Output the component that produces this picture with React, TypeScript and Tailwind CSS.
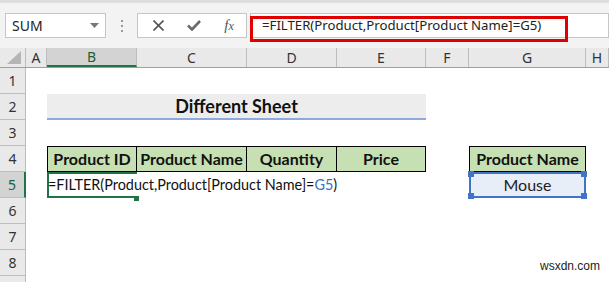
import React from 'react';

const COLS = [26, 21, 90, 110, 90, 89, 43, 117, 23];
const LETTERS = ['', 'A', 'B', 'C', 'D', 'E', 'F', 'G', 'H'];
const ROW_H = 26;

const cellFont = { fontFamily: 'Lato, "Open Sans", sans-serif' };

function Toolbar() {
  return (
    <div className="relative flex h-[45px] items-start bg-[#f3f3f3] pt-[10px]">
      {/* name box */}
      <div className="ml-[5px] flex h-[25px] w-[101px] items-center justify-between border border-[#c6c6c6] bg-white pl-[6px] pr-[6px]">
        <span className="text-[14px] text-[#222]" style={{ fontFamily: '"Noto Sans", "Open Sans", sans-serif' }}>
          SUM
        </span>
        <svg width="9" height="5" viewBox="0 0 9 5">
          <path d="M0 0 L9 0 L4.5 5 Z" fill="#777" />
        </svg>
      </div>
      {/* dots */}
      <div className="flex w-[31px] flex-col items-center gap-[3px] pt-[7px]">
        <span className="h-[2px] w-[2px] bg-[#999]" />
        <span className="h-[2px] w-[2px] bg-[#999]" />
        <span className="h-[2px] w-[2px] bg-[#999]" />
      </div>
      {/* cancel / enter / fx */}
      <div className="flex h-[25px] w-[110px] items-center border border-[#c6c6c6] bg-white">
        <div className="flex w-[38px] justify-center pl-[2px]">
          <svg width="11" height="11" viewBox="0 0 11 11">
            <path d="M0.5 0.5 L10.5 10.5 M10.5 0.5 L0.5 10.5" stroke="#555" strokeWidth="1.6" />
          </svg>
        </div>
        <div className="flex w-[36px] justify-center">
          <svg width="14" height="11" viewBox="0 0 14 11">
            <path d="M1 5.5 L5 9.5 L13 1" stroke="#6a6a6a" strokeWidth="2.6" fill="none" />
          </svg>
        </div>
        <div className="flex w-[34px] justify-center">
          <span className="text-[15px] italic text-[#555]" style={{ fontFamily: '"Liberation Serif", serif' }}>
            f<span className="text-[12px]">x</span>
          </span>
        </div>
      </div>
      {/* formula bar */}
      <div className="ml-[3px] flex h-[25px] flex-1 items-center border border-[#c6c6c6] bg-white pl-[11px]">
        <span className="whitespace-nowrap text-[13.2px] text-[#222]" style={{ fontFamily: '"Noto Sans", "Open Sans", sans-serif' }}>
          =FILTER(Product,Product[Product Name]=G5)
        </span>
      </div>
      {/* highlight annotation */}
      <div className="pointer-events-none absolute left-[250px] top-[13px] h-[26px] w-[318px] border-[3px] border-[#e10000]" />
    </div>
  );
}

function ColumnHeaders() {
  return (
    <div className="flex h-[20px] border-b border-[#a0a0a0] bg-[#e9e9e9]">
      {COLS.map((w, i) => (
        <div
          key={i}
          style={{ width: w }}
          className={
            i === 0
              ? 'relative shrink-0 border-r border-[#bdbdbd]'
              : i === 2
              ? 'flex shrink-0 items-center justify-center border-r border-[#bdbdbd] border-b-2 border-b-[#217346] bg-[#d3d3d3] text-[14px] text-[#1f5f3a]'
              : 'flex shrink-0 items-center justify-center border-r border-[#bdbdbd] text-[14px] text-[#333]'
          }
        >
          {i === 0 ? (
            <svg className="absolute bottom-[3px] right-[4px]" width="14" height="13" viewBox="0 0 14 13">
              <path d="M14 0 L14 13 L0 13 Z" fill="#b5b5b5" />
            </svg>
          ) : (
            <span style={{ fontFamily: '"Noto Sans", sans-serif' }}>{LETTERS[i]}</span>
          )}
        </div>
      ))}
    </div>
  );
}

function RowHeader({ n }: { n: number }) {
  const active = n === 5;
  return (
    <div
      className={
        active
          ? 'flex w-[26px] shrink-0 items-center justify-center border-b border-b-[#bdbdbd] border-r-2 border-r-[#217346] bg-[#d3d3d3] text-[14px] text-[#1f5f3a]'
          : 'flex w-[26px] shrink-0 items-center justify-center border-b border-r border-[#bdbdbd] bg-[#e9e9e9] text-[14px] text-[#333]'
      }
      style={{ fontFamily: '"Noto Sans", sans-serif' }}
    >
      {n}
    </div>
  );
}

function Handle({ pos }: { pos: string }) {
  return <span className={`absolute h-[6px] w-[6px] bg-[#4472c4] ${pos}`} />;
}

export default function App() {
  const headers = ['Product ID', 'Product Name', 'Quantity', 'Price'];

  return (
    <div className="h-[282px] w-[609px] overflow-hidden bg-white">
      <div className="h-[3px] bg-[#dedede]" />
      <Toolbar />
      <ColumnHeaders />

      {/* row 1 */}
      <div className="flex" style={{ height: ROW_H }}>
        <RowHeader n={1} />
      </div>

      {/* row 2 - title */}
      <div className="flex" style={{ height: ROW_H }}>
        <RowHeader n={2} />
        <div className="w-[21px] shrink-0" />
        <div
          className="flex w-[379px] shrink-0 items-center justify-center border-b-[2px] border-[#8ea9db] bg-[#ededed] text-[18px] font-bold text-[#111]"
          style={cellFont}
        >
          Different Sheet
        </div>
      </div>

      {/* row 3 */}
      <div className="flex" style={{ height: ROW_H }}>
        <RowHeader n={3} />
      </div>

      {/* row 4 - headers */}
      <div className="flex" style={{ height: ROW_H }}>
        <RowHeader n={4} />
        <div className="w-[21px] shrink-0" />
        {headers.map((h, i) => (
          <div
            key={h}
            style={{ ...cellFont, width: COLS[i + 2] }}
            className={
              'flex shrink-0 items-center justify-center border-y border-r border-black bg-[#c6e0b4] text-[16px] font-bold text-[#111] ' +
              (i === 0 ? 'border-l' : '')
            }
          >
            {h}
          </div>
        ))}
        <div className="w-[43px] shrink-0" />
        <div
          className="flex w-[117px] shrink-0 items-center justify-center border border-black bg-[#c6e0b4] text-[16px] font-bold text-[#111]"
          style={cellFont}
        >
          Product Name
        </div>
      </div>

      {/* row 5 - formula + lookup value */}
      <div className="flex" style={{ height: ROW_H }}>
        <RowHeader n={5} />
        <div className="w-[21px] shrink-0" />
        <div className="relative z-10 w-[90px] shrink-0">
          <div className="absolute inset-0 border-b-2 border-l-2 border-t-2 border-[#217346]" />
          <span className="absolute -bottom-[3px] right-[-2px] h-[5px] w-[5px] bg-[#217346]" />
          <div
            className="relative flex h-full items-center whitespace-nowrap pl-[1px] text-[14.4px] text-[#111]"
            style={cellFont}
          >
            =FILTER(Product,Product[Product Name]=<span className="text-[#3b6fc4]">G5</span>)
          </div>
        </div>
        <div className="w-[332px] shrink-0" />
        <div
          className="relative flex w-[117px] shrink-0 items-center justify-center border-2 border-[#4472c4] bg-[#e8eef8] text-[16px] text-[#222]"
          style={cellFont}
        >
          Mouse
          <Handle pos="-left-[3px] -top-[3px]" />
          <Handle pos="-right-[3px] -top-[3px]" />
          <Handle pos="-left-[3px] -bottom-[3px]" />
          <Handle pos="-right-[3px] -bottom-[3px]" />
        </div>
      </div>

      {/* rows 6-8 */}
      {[6, 7, 8].map((n) => (
        <div key={n} className="flex" style={{ height: ROW_H }}>
          <RowHeader n={n} />
          {n === 8 && (
            <div className="flex flex-1 items-end justify-end pb-[1px] pr-[9px]">
              <span className="text-[12px] text-[#222]" style={{ fontFamily: '"Liberation Sans", sans-serif' }}>
                wsxdn.com
              </span>
            </div>
          )}
        </div>
      ))}
      <div className="flex h-[10px]">
        <div className="w-[26px] border-r border-[#bdbdbd] bg-[#e9e9e9]" />
      </div>
    </div>
  );
}
